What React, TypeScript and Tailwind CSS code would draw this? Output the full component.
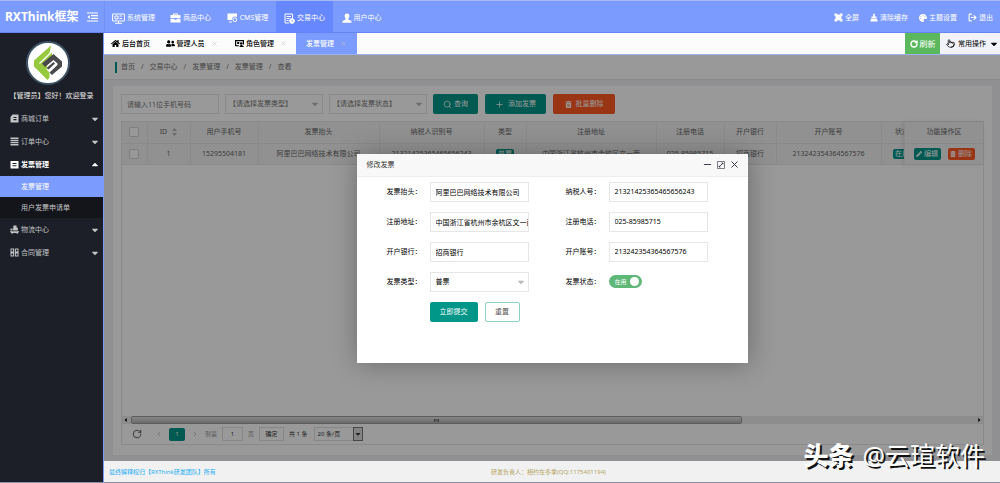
import type { ReactNode } from 'react';
import clsx from 'clsx';
import { FaHome, FaUserFriends, FaPalette, FaCaretDown, FaPencilAlt, FaTrashAlt } from 'react-icons/fa';
import { LogOut, Minus, Pointer, Plus, RotateCw, Search, X, ChevronLeft, ChevronRight } from 'lucide-react';

const navItems = [
  { id: 'system', label: '系统管理' },
  { id: 'goods', label: '商品中心' },
  { id: 'cms', label: 'CMS管理' },
  { id: 'trade', label: '交易中心' },
  { id: 'user', label: '用户中心' },
];

const menuItems = [
  { id: 'mall', label: '商城订单' },
  { id: 'order', label: '订单中心' },
  { id: 'invoice', label: '发票管理', children: ['发票管理', '用户发票申请单'] },
  { id: 'logistics', label: '物流中心' },
  { id: 'contract', label: '合同管理' },
];

const columns = [
  { title: '用户手机号', width: 'w-[68px]', value: '15295504181' },
  { title: '发票抬头', width: 'w-[121px]', value: '阿里巴巴网络技术有限公司' },
  { title: '纳税人识别号', width: 'w-[105px]', value: '21321425365465656243' },
  { title: '类型', width: 'w-[42px]', value: '普票', tag: true },
  { title: '注册地址', width: 'w-[130px]', value: '中国浙江省杭州市余杭区文一西' },
  { title: '注册电话', width: 'w-[68px]', value: '025-85985715' },
  { title: '开户银行', width: 'w-[52px]', value: '招商银行' },
  { title: '开户账号', width: 'w-[105px]', value: '213242354364567576' },
  { title: '状态', width: 'w-[42px]', value: '在用', tag: true },
];

export default function App() {
  return (
    <div className="flex h-screen flex-col overflow-hidden border-b border-[#8592a6] bg-[#f0f0f5] font-['Noto_Sans','Noto_Sans_CJK_SC',sans-serif] text-[7px] leading-[10px] text-[#333]">
      <Header />
      <div className="flex min-h-0 flex-1">
        <Sidebar />
        <div className="flex min-w-0 flex-1 flex-col">
          <TabBar />
          <main className="relative flex min-h-0 flex-1 flex-col">
            <Breadcrumb />
            <InvoiceList />
            <div className="absolute inset-0 flex items-center justify-center bg-black/40">
              <InvoiceDialog />
            </div>
          </main>
          <footer className="flex h-[21px] flex-none items-center bg-[#f1f1f1] px-[5px] text-[6px]">
            <a href="#" className="w-[382px] text-[#1eaef0]">最终解释权归【RXThink研发团队】所有</a>
            <span className="text-[#b3a566]">研发负责人：相约在冬季(QQ:1175401194)</span>
          </footer>
        </div>
      </div>
      <Watermark />
    </div>
  );
}

function Header() {
  return (
    <header className="flex h-[33px] flex-none items-stretch border-t border-b border-t-[#a6b9f5] border-b-[#6683f7] bg-[#7b9bff] text-white">
      <div className="flex w-[105px] items-center justify-between border-r border-[#7390f5] pr-[6px] pl-[5px]">
        <h1 className="text-[12px] font-bold">RXThink框架</h1>
        <button aria-label="收起菜单">
          <svg viewBox="0 0 11 10" className="h-[10px] w-[11px]" stroke="currentColor" strokeWidth="1.200" fill="none">
            <path d="M0 1h11M4 3.700h7M4 6.300h7M0 9h11" />
            <path d="M2.800 3v4L.5 5z" fill="currentColor" stroke="none" />
          </svg>
        </button>
      </div>
      <nav className="flex">
        {navItems.map((item) => (
          <a
            key={item.id}
            href="#"
            className={clsx('flex w-[57px] items-center justify-center gap-[2px] pt-[3px]', item.id === 'trade' && 'bg-[#6787ff]')}
          >
            <NavIcon id={item.id} />
            {item.label}
          </a>
        ))}
      </nav>
      <div className="ml-auto flex items-center gap-[11px] pt-[2px] pr-[7px]">
        <TopLink
          icon={
            <svg viewBox="0 0 9 9" className="h-[9px] w-[9px]" fill="currentColor">
              <path d="M.5.5h2.800L2.500 1.500h4L5.700.5h2.800v2.800l-1-.8v4l1-.8v2.800H5.700l.8-1h-4l.8 1H.5V5.700l1 .8v-4l-1 .8z" />
            </svg>
          }
        >
          全屏
        </TopLink>
        <TopLink
          icon={
            <svg viewBox="0 0 8 9" className="h-[9px] w-[8px]" fill="currentColor">
              <path d="M3.200.8h1.600v2.700h1.700v1.400h-5V3.500h1.700zM1.200 5.500h5.600l1 3H.2z" />
            </svg>
          }
        >
          清除缓存
        </TopLink>
        <TopLink icon={<FaPalette size={8} />}>主题设置</TopLink>
        <TopLink icon={<LogOut size={9} strokeWidth={3} />}>退出</TopLink>
      </div>
    </header>
  );
}

function TopLink({ icon, children }: { icon: ReactNode; children: ReactNode }) {
  return (
    <a href="#" className="flex items-center gap-[2px]">
      {icon}
      {children}
    </a>
  );
}

function NavIcon({ id }: { id: string }) {
  if (id === 'system') {
    return (
      <svg viewBox="0 0 13 11" className="h-[11px] w-[13px]" fill="none" stroke="currentColor">
        <path d="M.6 1h11.800v7H.6zM6.500 8v2M3 10.300h7" />
        <path d="M3 3h3v3H3zM7.500 3h2.500M7.500 5.500h2.500" />
      </svg>
    );
  }
  if (id === 'goods') {
    return (
      <svg viewBox="0 0 11 10" className="h-[10px] w-[11px]" fill="currentColor">
        <path d="M3 2V.5h5V2h2.500v3H.5V2zM4 2h3v-.6H4zM.5 5.800h3.800v1h2.400v-1h3.800V9.500H.5z" />
      </svg>
    );
  }
  if (id === 'cms') {
    return (
      <svg viewBox="0 0 11 10" className="h-[10px] w-[11px]">
        <path d="M.5.5h9.500v3.800A3 3 0 0 0 5 7H.5z" fill="currentColor" />
        <circle cx="7.800" cy="6.700" r="1.900" fill="none" stroke="currentColor" />
        <path d="M2 9h3" stroke="currentColor" />
      </svg>
    );
  }
  if (id === 'trade') {
    return (
      <svg viewBox="0 0 11 11" className="h-[11px] w-[11px]" fill="none" stroke="currentColor">
        <path d="M8.500 5V1H1v9h4M2.500 3.500h4.500M2.500 5.500h3M2.500 7.500h2" />
        <circle cx="8" cy="8" r="2.400" fill="currentColor" />
        <path d="M8 6.700V8h1.200" stroke="#6787ff" strokeWidth=".7" />
      </svg>
    );
  }
  return (
    <svg viewBox="0 0 10 10" className="h-[10px] w-[10px]" fill="currentColor">
      <path d="M5 .4c1.700 0 2.600 1.200 2.400 2.900-.1 1-.6 1.800-1.100 2.400v.8L9.500 8v1.700H.5V8l3.200-1.500v-.8c-.5-.6-1-1.400-1.100-2.400C2.400 1.600 3.300.4 5 .4z" />
    </svg>
  );
}

function Sidebar() {
  return (
    <aside className="w-[104px] flex-none border-r border-[#7b9bff] bg-[#1c1f27] text-[#c3c4c7]">
      <div className="flex h-[74px] flex-col items-center pt-[8px] pr-[8px]">
        <Avatar />
        <p className="mt-[6px] ml-[8px] whitespace-nowrap text-[#e8e8e8]">【管理员】您好！欢迎登录</p>
      </div>
      <nav>
        {menuItems.map((item) => (
          <div key={item.id}>
            <button className={clsx('flex h-[23px] w-full items-center gap-[2px] pr-[3px] pl-[10px]', item.children && 'font-bold text-white')}>
              <MenuIcon id={item.id} />
              {item.label}
              <FaCaretDown size={10} className={clsx('ml-auto', item.children && 'rotate-180')} />
            </button>
            {item.children?.map((child, i) => (
              <a
                key={child}
                href="#"
                className={clsx('flex h-[21px] items-center pl-[21px]', i === 0 ? 'bg-[#7b9bff] text-white' : 'bg-[#14151a]')}
              >
                {child}
              </a>
            ))}
          </div>
        ))}
      </nav>
    </aside>
  );
}

function Avatar() {
  return (
    <svg viewBox="0 0 44 44" className="h-[44px] w-[44px] flex-none" role="img" aria-label="RXThink">
      <circle cx="22" cy="22" r="21" fill="#fff" stroke="#3f5567" strokeWidth="2" />
      <path d="M25 4.500 8 19.500v6L21.500 39l2-2.500v-5l-6.500-7 9-8.500V11l-13 11.500v1L20 31" fill="#97c93d" />
      <path d="m13.500 22.500 12-11.500" stroke="#fff" strokeWidth="1.200" />
      <path d="M16 22.500 27.500 13l8.500 7.500v5L26 34l-2.500-2.500 8-7.500v-1.500L27.500 19 19 26z" fill="#4a4a4c" />
      <path d="m20.500 27 7-6 1.500 1.500-6.500 6z" fill="#4a4a4c" />
    </svg>
  );
}

function MenuIcon({ id }: { id: string }) {
  return (
    <svg viewBox="0 0 9 9" className="h-[9px] w-[9px]" fill="currentColor">
      {id === 'mall' && <path fillRule="evenodd" d="M2.500.5h6v8h-8V3zM3.500 3v1h3V3zm0 2v1.200h3V5z" />}
      {id === 'order' && <path d="M.5.5h8v1.500h-8zM.5 2.700h8v1.300h-8zM.5 4.700h8V6h-8zM.5 6.700h8v1.800h-8z" />}
      {id === 'invoice' && <path fillRule="evenodd" d="M.5 1h8v7.500h-8zM2.500 3v1h4V3zm0 2.200v1h4v-1z" />}
      {id === 'logistics' && <path d="M3.500.5h3v2h1.300v3H3zM.5 3.500h2v2H.5zM0 6.200h9v1H8.200a1 1 0 0 1-2 .8H3a1 1 0 0 1-2-.8H0z" />}
      {id === 'contract' && (
        <path fillRule="evenodd" d="M.5.5h3.600v8H.5zM4.900.5h3.600v8H4.900zM1.500 1.500v2h1.600v-2zM5.900 1.500v2h1.600v-2zM1.500 5.500v2h1.600v-2zM5.900 5.500v2h1.600v-2z" />
      )}
    </svg>
  );
}

function TabBar() {
  return (
    <div className="flex h-[22px] flex-none items-stretch border-b border-[#9db3f5] bg-[#fcfcfd] text-black">
      <Tab width="w-[53px]" icon={<FaHome size={9} />} label="后台首页" />
      <Tab width="w-[69px]" icon={<FaUserFriends size={9} />} label="管理人员" closable />
      <Tab
        width="w-[70px]"
        icon={
          <svg viewBox="0 0 9 9" className="h-[9px] w-[9px]" fill="currentColor">
            <path fillRule="evenodd" d="M0 1h9v4.500H7.800V2.200H1.200v4H4v1H0zM2.200 3h2v2h-2zM6.200 3.200a1.300 1.300 0 1 1 0 2.600 1.300 1.300 0 0 1 0-2.600zM4.500 8c.2-1.300.9-2 1.700-2S8.500 6.700 9 8z" />
          </svg>
        }
        label="角色管理"
        closable
      />
      <Tab width="w-[61px]" label="发票管理" closable active />
      <button className="ml-auto flex w-[35px] items-center justify-center gap-[2px] bg-[#5cb85c] text-[8px] text-white">
        <RotateCw size={8} strokeWidth={4} />
        刷新
      </button>
      <button className="flex w-[60px] items-center justify-between bg-[#f2f3f8] pr-px pl-[6px]">
        <Pointer size={9} />
        常用操作
        <FaCaretDown size={10} />
      </button>
    </div>
  );
}

type TabProps = { width: string; icon?: ReactNode; label: string; closable?: boolean; active?: boolean };

function Tab({ width, icon, label, closable, active }: TabProps) {
  return (
    <div className={clsx('flex items-center justify-center', width, active && 'bg-[#7b9bff] text-white')}>
      <a href="#" className="flex items-center gap-[2px] whitespace-nowrap font-medium">
        {icon}
        {label}
      </a>
      {closable && (
        <button aria-label="关闭" className="ml-[6px] text-[#c4c4c4]">
          <X size={7} />
        </button>
      )}
    </div>
  );
}

function Breadcrumb() {
  const items = ['首页', '交易中心', '发票管理', '发票管理', '查看'];
  return (
    <nav className="flex h-[25px] flex-none items-center border-b border-[#e4e4e8] bg-white pl-[11px] text-[#777]">
      <span className="mr-[4px] h-[11px] w-[2px] bg-[#009688]" />
      {items.map((item, i) => (
        <span key={i}>
          {i > 0 && <span className="mx-[6px]">/</span>}
          {item}
        </span>
      ))}
    </nav>
  );
}

function InvoiceList() {
  return (
    <section className="mr-[8px] ml-[9px] mt-[6px] mb-[6px] flex min-h-0 flex-1 flex-col bg-white px-[8px] pt-[8px] pb-[10px] text-[#666]">
      <form className="flex gap-[6px]">
        <input aria-label="手机号码" placeholder="请输入11位手机号码" className="h-[20px] w-[98px] border border-[#e6e6e6] px-[5px] placeholder:text-[#777]" />
        <Dropdown label="发票类型" value="【请选择发票类型】" />
        <Dropdown label="发票状态" value="【请选择发票状态】" />
        <div className="flex gap-[7px] text-white">
          <button type="button" className="flex h-[20px] w-[45px] items-center justify-center gap-[2px] rounded-xs bg-[#009688]">
            <Search size={9} />
            查询
          </button>
          <button type="button" className="flex h-[20px] w-[61px] items-center justify-center gap-[4px] rounded-xs bg-[#009688]">
            <Plus size={9} />
            添加发票
          </button>
          <button type="button" className="flex h-[20px] w-[62px] items-center justify-center gap-[4px] rounded-xs bg-[#ff5722]">
            <FaTrashAlt size={7} />
            批量删除
          </button>
        </div>
      </form>

      <div className="mt-[7px] flex min-h-0 flex-1 flex-col border border-[#e6e6e6]">
        <div className="flex flex-1 items-start">
          <div className="min-w-0 flex-1 overflow-hidden">
            <table className="w-[801px] table-fixed border-collapse text-center">
              <thead>
                <tr className="h-[21px] bg-[#f2f2f2]">
                  <Th width="w-[25px]"><Check label="全选" /></Th>
                  <Th width="w-[43px]">
                    <span className="flex items-center justify-center gap-[5px]">
                      ID
                      <svg viewBox="0 0 5 8" className="h-[8px] w-[5px]" fill="#b2b2b2">
                        <path d="M2.500 0 5 3H0zM2.500 8 5 5H0z" />
                      </svg>
                    </span>
                  </Th>
                  {columns.map((col) => (
                    <Th key={col.title} width={col.width}>{col.title}</Th>
                  ))}
                </tr>
              </thead>
              <tbody>
                <tr className="h-[21px] bg-[#f2f2f2]">
                  <Td><Check label="选择第1行" /></Td>
                  <Td>1</Td>
                  {columns.map((col) => (
                    <Td key={col.title}>
                      {col.tag ? <span className="inline-block rounded-xs bg-[#009688] px-[2px] text-white">{col.value}</span> : col.value}
                    </Td>
                  ))}
                </tr>
              </tbody>
            </table>
          </div>
          <div className="w-[79px] flex-none border-l border-[#e6e6e6] shadow-[-1px_0_4px_rgba(0,0,0,0.1)]">
            <table className="w-full border-collapse text-center">
              <thead>
                <tr className="h-[21px] bg-[#f2f2f2]">
                  <th className="border-b border-[#e6e6e6] p-0 font-normal">功能操作区</th>
                </tr>
              </thead>
              <tbody>
                <tr className="h-[21px] bg-[#f2f2f2]">
                  <td className="border-b border-[#e6e6e6] p-0">
                    <div className="flex justify-center gap-[7px] text-white">
                      <button className="flex h-[12px] w-[27px] items-center justify-center gap-[2px] rounded-xs bg-[#009688]">
                        <FaPencilAlt size={6} />
                        编辑
                      </button>
                      <button className="flex h-[12px] w-[27px] items-center justify-center gap-[2px] rounded-xs bg-[#ff5722]">
                        <FaTrashAlt size={6} />
                        删除
                      </button>
                    </div>
                  </td>
                </tr>
              </tbody>
            </table>
          </div>
        </div>

        {/* horizontal scrollbar */}
        <div className="flex h-[8px] flex-none items-center bg-[#ececec]">
          <FaCaretDown size={6} className="mx-[1px] rotate-90 text-black" />
          <div className="ml-[1px] flex h-full w-[71%] items-center justify-center rounded-xs border border-[#999] bg-linear-to-b from-[#e0e0e0] to-[#b4b4b4]">
            <span className="h-[3px] w-[5px] border-x border-[#666] bg-[#999]" />
          </div>
          <FaCaretDown size={6} className="mr-[1px] ml-auto -rotate-90 text-black" />
        </div>
        <Pager />
      </div>
    </section>
  );
}

function Dropdown({ label, value }: { label: string; value: string }) {
  return (
    <div className="relative">
      <select aria-label={label} className="h-[20px] w-[98px] appearance-none border border-[#e6e6e6] pl-[3px] text-[#777]">
        <option>{value}</option>
      </select>
      <Arrow />
    </div>
  );
}

function Arrow() {
  return <FaCaretDown size={10} className="pointer-events-none absolute top-1/2 right-[3px] -translate-y-1/2 text-[#b8b8b8]" />;
}

function Th({ width, children }: { width: string; children: ReactNode }) {
  return <th className={clsx('border-r border-b border-[#e6e6e6] p-0 font-normal', width)}>{children}</th>;
}

function Td({ children }: { children: ReactNode }) {
  return <td className="overflow-hidden border-r border-b border-[#e6e6e6] p-0 whitespace-nowrap">{children}</td>;
}

function Check({ label }: { label: string }) {
  return <input type="checkbox" aria-label={label} className="mx-auto block h-[10px] w-[10px] appearance-none rounded-xs border border-[#d2d2d2] bg-white" />;
}

function Pager() {
  return (
    <div className="flex h-[20px] flex-none items-center pl-[10px] text-[6px] text-[#333]">
      <button aria-label="刷新"><RotateCw size={10} className="text-[#444]" /></button>
      <button aria-label="上一页" className="ml-[13px] text-[#aaa]"><ChevronLeft size={8} /></button>
      <button className="ml-[6px] h-[13px] w-[16px] rounded-xs bg-[#009688] text-white">1</button>
      <button aria-label="下一页" className="ml-[6px] text-[#aaa]"><ChevronRight size={8} /></button>
      <label className="ml-[6px] flex items-center gap-[5px] text-[#999]">
        到第
        <input defaultValue="1" className="h-[14px] w-[21px] border border-[#e2e2e2] text-center text-[#333]" />
        页
      </label>
      <button className="ml-[5px] h-[14px] w-[25px] border border-[#e2e2e2]">确定</button>
      <span className="ml-[5px]">共 1 条</span>
      <div className="relative ml-[6px]">
        <select aria-label="每页条数" className="h-[14px] w-[49px] appearance-none border border-[#e2e2e2] pl-[3px]">
          <option>20 条/页</option>
        </select>
        <span className="pointer-events-none absolute inset-y-0 right-0 flex w-[10px] items-center justify-center border border-[#777] bg-[#ddd]">
          <FaCaretDown size={8} className="flex-none" />
        </span>
      </div>
    </div>
  );
}

function InvoiceDialog() {
  return (
    <div role="dialog" aria-label="修改发票" className="min-h-[209px] w-[391px] max-w-full bg-white shadow-[1px_1px_25px_rgba(0,0,0,0.3)]">
      <div className="flex h-[23px] items-center border-b border-[#eee] bg-[#f8f8f8] pr-[8px] pl-[10px]">
        <h2 className="mr-auto">修改发票</h2>
        <div className="flex items-center gap-[4px] text-[#2e2d3c]">
          <button aria-label="最小化"><Minus size={11} /></button>
          <button aria-label="最大化">
            <svg viewBox="0 0 8 8" className="h-[8px] w-[8px]" fill="none" stroke="currentColor" strokeWidth=".8">
              <path d="M.5.5h7v7h-7z" strokeWidth=".6" />
              <path d="M4.600 2h1.400v1.400M6 2 2 6M2 4.600V6h1.400" />
            </svg>
          </button>
          <button aria-label="关闭"><X size={11} /></button>
        </div>
      </div>
      <form className="grid grid-cols-2 gap-x-[15px] gap-y-[10px] pt-[5px] pr-[40px] pl-[8px] text-black">
        <Field id="title" label="发票抬头" value="阿里巴巴网络技术有限公司" />
        <Field id="taxNo" label="纳税人号" value="21321425365465656243" />
        <Field id="address" label="注册地址" value="中国浙江省杭州市余杭区文一西路" />
        <Field id="phone" label="注册电话" value="025-85985715" />
        <Field id="bank" label="开户银行" value="招商银行" />
        <Field id="account" label="开户账号" value="213242354364567576" />
        <div className="flex h-[20px] items-center">
          <label htmlFor="type" className="w-[65px] pr-[8px] text-right">发票类型：</label>
          <div className="relative h-full flex-1">
            <select id="type" className="h-full w-full appearance-none border border-[#e6e6e6] pl-[5px]">
              <option>普票</option>
            </select>
            <Arrow />
          </div>
        </div>
        <div className="flex h-[20px] items-center">
          <label htmlFor="status" className="w-[65px] pr-[8px] text-right">发票状态：</label>
          <label className="flex h-[13px] w-[33px] items-center justify-between rounded-full bg-[#5fb878] pr-[3px] pl-[6px] text-[6px] text-white">
            <input id="status" type="checkbox" role="switch" defaultChecked className="sr-only" />
            在用
            <span className="h-[9px] w-[9px] rounded-full bg-white" />
          </label>
        </div>
        <div className="col-span-2 flex gap-[7px] pl-[65px]">
          <button type="submit" className="h-[20px] w-[48px] rounded-xs bg-[#009688] text-white">立即提交</button>
          <button type="reset" className="h-[20px] w-[35px] rounded-xs border border-[#8fd0c9] text-[#555]">重置</button>
        </div>
      </form>
    </div>
  );
}

function Field({ id, label, value }: { id: string; label: string; value: string }) {
  return (
    <div className="flex h-[20px] items-center">
      <label htmlFor={id} className="w-[65px] pr-[8px] text-right">{label}：</label>
      <input id={id} defaultValue={value} className="h-full min-w-0 flex-1 border border-[#e6e6e6] pl-[5px]" />
    </div>
  );
}

function Watermark() {
  return (
    <div className="pointer-events-none absolute right-[15px] bottom-[12px] flex gap-[9px] text-[25px] leading-[32px] text-white [text-shadow:2px_2px_0_#111]">
      <b className="font-black">头条</b>
      <span>@云瑄软件</span>
    </div>
  );
}
